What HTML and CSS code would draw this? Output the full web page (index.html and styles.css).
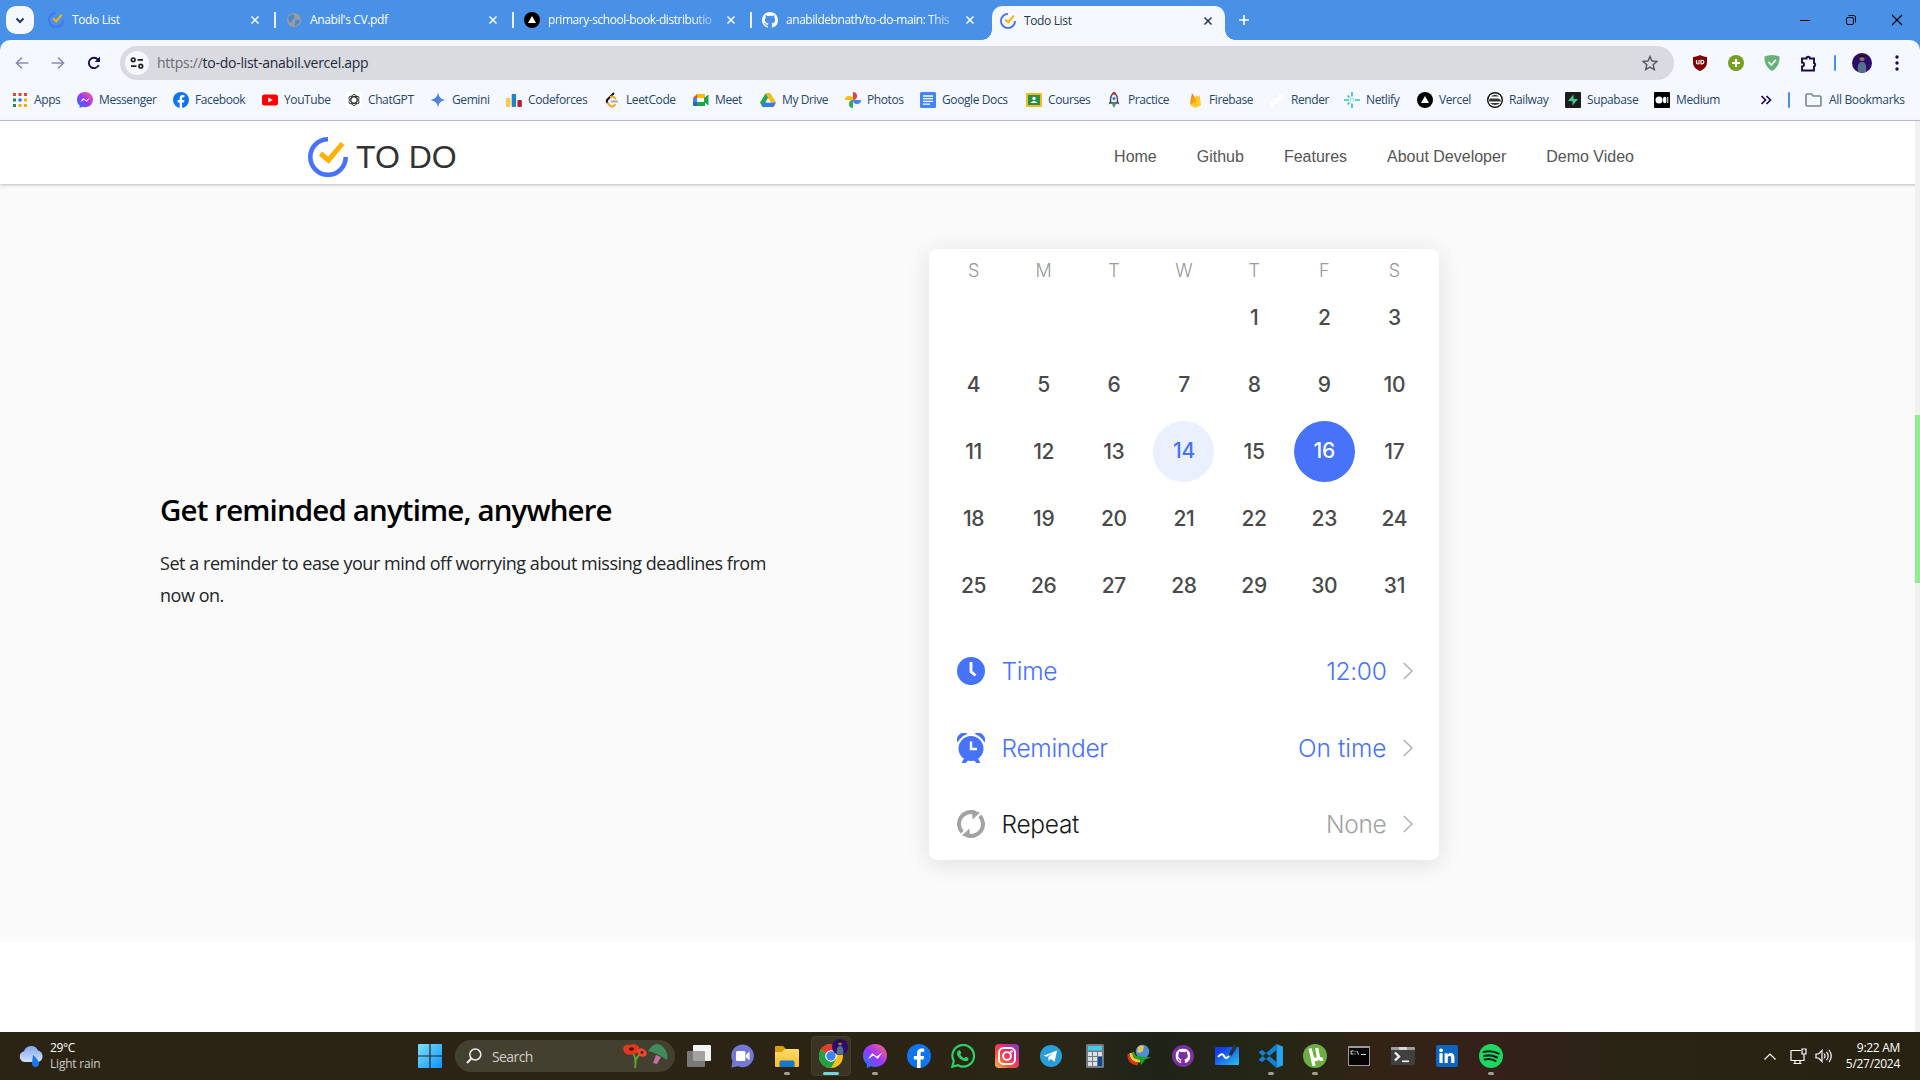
FILE: index.html
```html
<!DOCTYPE html>
<html lang="en">
<head>
<meta charset="utf-8">
<title>Todo List</title>
<link rel="stylesheet" href="styles.css">
</head>
<body>
<svg class="defs" width="0" height="0">
  <defs>
    <linearGradient id="msg" x1="0" y1="1" x2="1" y2="0"><stop offset="0" stop-color="#0a84ff"/><stop offset=".5" stop-color="#a033ff"/><stop offset="1" stop-color="#ff6a6e"/></linearGradient>
    <linearGradient id="insta" x1="0" y1="1" x2="1" y2="0"><stop offset="0" stop-color="#fdc04b"/><stop offset=".35" stop-color="#f7503c"/><stop offset=".65" stop-color="#d82d7e"/><stop offset="1" stop-color="#7a3ccc"/></linearGradient>
    <linearGradient id="win" x1="0" y1="0" x2="1" y2="1"><stop offset="0" stop-color="#7fe0ff"/><stop offset="1" stop-color="#0a93ff"/></linearGradient>
    <linearGradient id="cloud" x1="0" y1="0" x2="0" y2="1"><stop offset="0" stop-color="#7ea6ee"/><stop offset="1" stop-color="#d3e2fb"/></linearGradient>
    <linearGradient id="gem" x1="0" y1="0" x2="1" y2="1"><stop offset="0" stop-color="#1c7de0"/><stop offset="1" stop-color="#8d86d9"/></linearGradient>
    <linearGradient id="board" x1="0" y1="0" x2="1" y2="1"><stop offset=".2" stop-color="#123cf2"/><stop offset="1" stop-color="#2bc4e6"/></linearGradient>
    <linearGradient id="folder" x1="0" y1="0" x2="0" y2="1"><stop offset="0" stop-color="#ffdc6b"/><stop offset="1" stop-color="#fbbd24"/></linearGradient>
    <symbol id="todo" viewBox="0 0 40 40"><path d="M20 2.3A17.7 17.7 0 1 0 37.7 20" fill="none" stroke="#4772fa" stroke-width="4.6"/><path d="M12.500 16.500 20.500 23.200 34.500 6.500" fill="none" stroke="#ffb000" stroke-width="5"/></symbol>
    <symbol id="x" viewBox="0 0 10 10"><path d="M1.500 1.500l7 7M8.500 1.500l-7 7" stroke="currentColor" stroke-width="1.500"/></symbol>
    <symbol id="vercel" viewBox="0 0 16 16"><circle cx="8" cy="8" r="8"/><path d="M8 4l4 7H4z" fill="#fff"/></symbol>
    <symbol id="github" viewBox="0 0 16 16"><path fill="currentColor" d="M8 0C3.580 0 0 3.580 0 8c0 3.540 2.290 6.530 5.470 7.590.4.070.55-.17.55-.38 0-.19-.01-.82-.01-1.490-2.010.37-2.530-.49-2.690-.94-.09-.23-.48-.94-.82-1.130-.28-.15-.68-.52-.01-.53.63-.01 1.080.58 1.230.82.72 1.210 1.870.87 2.330.66.070-.52.28-.87.51-1.070-1.780-.2-3.640-.89-3.640-3.950 0-.87.31-1.590.82-2.150-.08-.2-.36-1.020.08-2.120 0 0 .67-.21 2.200.82.64-.18 1.320-.27 2-.27s1.360.09 2 .27c1.530-1.040 2.200-.82 2.200-.82.44 1.100.16 1.920.08 2.120.51.56.82 1.270.82 2.150 0 3.070-1.870 3.750-3.650 3.950.29.25.54.73.54 1.480 0 1.070-.01 1.930-.01 2.200 0 .21.15.46.55.38A8 8 0 0 0 16 8c0-4.420-3.580-8-8-8z"/></symbol>
    <symbol id="messenger" viewBox="0 0 24 24"><path fill="url(#msg)" d="M12 0C5.200 0 0 5 0 11.600c0 3.500 1.400 6.500 3.800 8.500L4 24l4-1.700c1.200.4 2.600.6 4 .6 6.800 0 12-5 12-11.500S18.800 0 12 0z"/><path d="M4.800 15.300 9.300 9l4.300 3.600L19.200 8.800 14.700 15l-4.300-3.500z" fill="#fff"/></symbol>
    <symbol id="facebook" viewBox="0 0 24 24"><circle cx="12" cy="12" r="12" fill="#0f74ee"/><path fill="#fff" d="M10 24v-8.400H6.900V12H10V9.400C10 6.200 11.900 4.500 14.600 4.500c1.100 0 2 .1 2.600.2v3h-1.700c-1.500 0-1.900.8-1.900 1.800V12h3.500l-.6 3.600h-2.900V24z"/></symbol>
    <symbol id="avatar" viewBox="0 0 20 20"><circle cx="10" cy="10" r="10" fill="#2c0b6b"/><path d="M6 18.800c-.6-5-.3-9.500 4-10 4.300.5 4.600 5 4 10a10 10 0 0 1-8 0z" fill="#54718a"/><circle cx="10" cy="5.500" r="2.500" fill="#96705d"/><path d="M7.300 5c0-4.300 5.400-4.300 5.400 0-1.800-1-3.600-1-5.400 0z" fill="#181111"/></symbol>
    <symbol id="chev" viewBox="0 0 10 18"><path d="M.8 1 9 9 .8 17" fill="none" stroke="#aaa" stroke-width="1.300"/></symbol>
  </defs>
</svg>

<div class="tabstrip">
  <button class="tabsearch"><svg width="10" height="7" viewBox="0 0 10 7"><path d="M1.500 1.500 5 5l3.500-3.500" fill="none" stroke="#1d3a5f" stroke-width="2"/></svg></button>
  <div class="tab"><svg class="fav"><use href="#todo"/></svg><span class="tt">Todo List</span><svg class="close"><use href="#x"/></svg></div>
  <div class="tab"><svg class="fav" viewBox="0 0 16 16"><circle cx="8" cy="8" r="7" fill="#9c9c9c"/><path d="M2 6c2-3 4-4 6-4-1 2 1 2 0 4s-2 1-2 3-2 2-3 0zM9 8c2-1 4 0 5 1-1 3-3 4-5 5-1-2 1-3 0-6z" fill="#4b88ca"/></svg><span class="tt">Anabil's CV.pdf</span><svg class="close"><use href="#x"/></svg></div>
  <div class="tab"><svg class="fav"><use href="#vercel"/></svg><span class="tt fade">primary-school-book-distributio</span><svg class="close"><use href="#x"/></svg></div>
  <div class="tab last"><svg class="fav"><use href="#github"/></svg><span class="tt fade">anabildebnath/to-do-main: This</span><svg class="close"><use href="#x"/></svg></div>
  <div class="tab active"><svg class="fav"><use href="#todo"/></svg><span class="tt">Todo List</span><svg class="close"><use href="#x"/></svg></div>
  <svg class="plus" viewBox="0 0 12 12"><path d="M6 1v10M1 6h10" stroke="#fff" stroke-width="1.600"/></svg>
  <div class="winctl">
    <svg width="12" height="12" viewBox="0 0 12 12"><path d="M1 6.500h10" stroke="#000"/></svg>
    <svg width="12" height="12" viewBox="0 0 12 12" fill="none" stroke="#000"><rect x="1.500" y="3.500" width="7" height="7" rx="1.500"/><path d="M3.500 1.500h5a2 2 0 0 1 2 2v5"/></svg>
    <svg width="12" height="12" viewBox="0 0 12 12"><path d="M1 1l10 10M11 1 1 11" stroke="#000" stroke-width="1.100"/></svg>
  </div>
</div>

<div class="chrome">
  <div class="toolbar">
    <div class="navbtns">
      <svg width="14" height="14" viewBox="0 0 14 14" fill="none" stroke="#8f8db0" stroke-width="1.700"><path d="M13.500 7H1.500M7 1.500 1.500 7 7 12.500"/></svg>
      <svg width="14" height="14" viewBox="0 0 14 14" fill="none" stroke="#8f8db0" stroke-width="1.700"><path d="M.5 7h12M7 1.500 12.500 7 7 12.500"/></svg>
      <svg width="14" height="14" viewBox="0 0 14 14"><path d="M11.800 9A5.200 5.200 0 1 1 11 3.600l1 1" fill="none" stroke="#1c0a50" stroke-width="1.900"/><path d="M13 .5V6H7.800z" fill="#1c0a50"/></svg>
    </div>
    <div class="omni">
      <span class="site"><svg width="14" height="12" viewBox="0 0 14 12" fill="none" stroke="#222" stroke-width="1.700"><circle cx="3.200" cy="2.800" r="1.800"/><path d="M7.500 2.800H13M1 9.200h5.500"/><circle cx="10.800" cy="9.200" r="1.800"/></svg></span>
      <span class="url"><i>https://</i>to-do-list-anabil.vercel.app</span>
      <svg class="star" viewBox="0 0 16 16"><path d="M8 1.500l2 4.500 4.900.5-3.700 3.300 1.100 4.800L8 12.100l-4.300 2.500 1.100-4.800L1.100 6.500 6 6z" fill="none" stroke="#5a5c66" stroke-width="1.500"/></svg>
    </div>
    <div class="exts">
      <svg width="16" height="16" viewBox="0 0 16 16"><path d="M8 0c2 1.200 4 1.700 7 2v5c0 4-2 7-7 9-5-2-7-5-7-9V2c3-.3 5-.8 7-2z" fill="#800000"/><path d="M4.500 5v2.500q0 1.500 1.300 1.500T7 7.500V5M9 5.300v3.500h1q1.800 0 1.800-1.800T10 5.300z" fill="none" stroke="#fff" stroke-width="1.200"/></svg>
      <svg width="16" height="16" viewBox="0 0 16 16"><circle cx="8" cy="8" r="8" fill="#76a021"/><path d="M8 4v8M4 8h8" stroke="#fff" stroke-width="2.200"/></svg>
      <svg width="16" height="16" viewBox="0 0 16 16"><path d="M8 0c3 .2 5 .6 7.500 1.500C15.800 8 13.500 12.500 8 16 2.500 12.500.2 8 .5 1.500 3 .6 5 .2 8 0z" fill="#67b279"/><path d="M4.500 7l2.800 3L12 4.800" fill="none" stroke="#fff" stroke-width="1.600"/></svg>
      <svg width="17" height="17" viewBox="0 0 17 17"><path d="M2 3.500h4.500a1.700 1.700 0 0 1 3.400 0H14V8a1.700 1.700 0 0 1 0 3.300V15.500H2v-4a2 2 0 0 0 0-4z" fill="none" stroke="#1c0a50" stroke-width="1.900"/></svg>
      <span class="vsep"></span>
      <svg width="20" height="20"><use href="#avatar"/></svg>
      <svg width="4" height="16" viewBox="0 0 4 16" fill="#1c0a50"><circle cx="2" cy="2" r="1.700"/><circle cx="2" cy="8" r="1.700"/><circle cx="2" cy="14" r="1.700"/></svg>
    </div>
  </div>
  <div class="bookmarks">
    <a><svg viewBox="0 0 16 16"><path fill="#ea4335" d="M1 1h3v3H1zM6.500 1h3v3h-3zM12 1h3v3h-3z"/><path fill="#1e8e4e" d="M1 6.500h3v3H1zM1 12h3v3H1z"/><path fill="#1a73e8" d="M6.500 6.500h3v3h-3z"/><path fill="#f9ab00" d="M12 6.500h3v3h-3zM6.500 12h3v3h-3zM12 12h3v3h-3z"/></svg>Apps</a>
    <a><svg><use href="#messenger"/></svg>Messenger</a>
    <a><svg><use href="#facebook"/></svg>Facebook</a>
    <a><svg viewBox="0 0 16 16"><rect y="2.500" width="16" height="11" rx="2.500" fill="#f00"/><path d="M6.300 5.500v5L10.800 8z" fill="#fff"/></svg>YouTube</a>
    <a><svg viewBox="0 0 16 16"><rect width="16" height="16" fill="#fff"/><g fill="none" stroke="#222" stroke-width=".9"><ellipse cx="8" cy="8" rx="3" ry="5.600"/><ellipse cx="8" cy="8" rx="3" ry="5.600" transform="rotate(60 8 8)"/><ellipse cx="8" cy="8" rx="3" ry="5.600" transform="rotate(120 8 8)"/></g></svg>ChatGPT</a>
    <a><svg viewBox="0 0 16 16"><path fill="url(#gem)" d="M8 0c.6 5 2.800 7.200 8 8-5.200.8-7.400 3-8 8-.6-5-2.800-7.200-8-8 5.200-.8 7.400-3 8-8z"/></svg>Gemini</a>
    <a><svg viewBox="0 0 16 16"><rect y="6" width="4.400" height="9" rx="1" fill="#f9cb4c"/><rect x="5.700" y="2" width="4.400" height="13" rx="1" fill="#2083c4"/><rect x="11.400" y="8" width="4.400" height="7" rx="1" fill="#b61f2b"/></svg>Codeforces</a>
    <a><svg viewBox="0 0 16 16" fill="none" stroke-width="2"><path d="M10 1 3.500 7.500q-1.500 1.700 0 3.300" stroke="#111"/><path d="M3.500 10.800 6 13.500q2 2 4 .3l1.500-1.500M6 5.300q2-1.500 4 0L12 7" stroke="#f5a623"/><path d="M7 9.500h7" stroke="#aaa"/></svg>LeetCode</a>
    <a><svg viewBox="0 0 16 16"><path d="M0 6l4-4v4z" fill="#ea4335"/><path d="M4 2h7q1 0 1 1v3H4z" fill="#fbbc04"/><path d="M0 6h4v4H0z" fill="#4285f4"/><path d="M0 10h4v4H1q-1 0-1-1z" fill="#1967d2"/><path d="M4 10h8v4H4zM11 6l4.500-3.500v11L11 10z" fill="#22a34b"/></svg>Meet</a>
    <a><svg viewBox="0 0 16 16"><path d="M5.500 1.500h5L5 15H2.500L0 10.500z" fill="#22a55a"/><path d="M5.500 1.500h5L16 10.500h-5z" fill="#fbbc04"/><path d="M4 10.500h12L13.500 15h-11z" fill="#3b78e7"/><path d="M8 6l3 4.500H5.300z" fill="#f5f8fe"/></svg>My Drive</a>
    <a><svg viewBox="0 0 16 16"><path d="M8 0a4 4 0 0 1 0 8z" fill="#ea4335"/><path d="M16 8a4 4 0 0 1-8 0z" fill="#4285f4"/><path d="M8 16a4 4 0 0 1 0-8z" fill="#34a853"/><path d="M0 8a4 4 0 0 1 8 0z" fill="#fbbc04"/></svg>Photos</a>
    <a><svg viewBox="0 0 16 16"><rect width="16" height="16" rx="1.500" fill="#4285f4"/><path d="M3 4h10M3 6.700h10M3 9.400h10M3 12.100h7" stroke="#fff" stroke-width="1.300"/></svg>Google Docs</a>
    <a><svg viewBox="0 0 16 16"><rect y="1" width="16" height="14" rx="1" fill="#f6bb18"/><rect x="2" y="3" width="12" height="10" fill="#27924f"/><circle cx="8" cy="6.500" r="1.700" fill="#fff"/><path d="M4.500 11q3.500-4 7 0z" fill="#fff"/></svg>Courses</a>
    <a><svg viewBox="0 0 16 16"><path d="M8 0q5 5 3 11H5Q3 5 8 0z" fill="#e8edf1" stroke="#3c4a57" stroke-width="1.300"/><path d="M5 2.800 8 .3l3 2.500z" fill="#d73030"/><circle cx="8" cy="6.500" r="1.500" fill="#2f80c0"/><path d="M6 12h4l-2 4z" fill="#38a552"/><path d="M4.500 8 2.500 12.500 5 11zM11.500 8l2 4.500L11 11z" fill="#334"/></svg>Practice</a>
    <a><svg viewBox="0 0 16 16"><path d="M3 12 5 .8 8 6z" fill="#f58220"/><path d="M3 13 10 3l1 2 1.500-2L14 13l-5.500 3z" fill="#ffca28"/><path d="M3 12.500 6 4l4 5z" fill="#ffa000"/></svg>Firebase</a>
    <a><svg viewBox="0 0 16 16"><path d="M1 15v-5h4V6h4V2.500q5-2.500 6 2-1 5-6 4.500v3H5v3z" fill="#fff"/></svg>Render</a>
    <a><svg viewBox="0 0 16 16"><path d="M8 0v4.500M8 11.500V16M0 8h5M11 8h5M3.500 12.500l2-2M3.500 3.500l2 2" stroke="#32c3c6" stroke-width="1.700"/><path d="M6.500 9.500v-3h3v3" stroke="#9cdfe0" fill="none"/></svg>Netlify</a>
    <a><svg><use href="#vercel"/></svg>Vercel</a>
    <a><svg viewBox="0 0 16 16"><circle cx="8" cy="8" r="7.300" fill="#fff" stroke="#111" stroke-width="1.400"/><path d="M2.500 6.500h8q3 0 3.500 3H2zM3 11h10q-5 4-10 0zM4 4.500h8q-4-3.500-8 0z" fill="#333"/></svg>Railway</a>
    <a><svg viewBox="0 0 16 16"><rect width="16" height="16" rx="1" fill="#1c1c1c"/><path d="M8.500 2.500V7H13l-5.500 6.500V9H3z" fill="#3ecf8e"/></svg>Supabase</a>
    <a><svg viewBox="0 0 16 16"><rect width="16" height="16" rx="1"/><circle cx="5" cy="8" r="3.500" fill="#fff"/><ellipse cx="10.700" cy="8" rx="1.700" ry="3.300" fill="#fff"/><path d="M13.800 5v6" stroke="#fff"/></svg>Medium</a>
    <svg class="more" viewBox="0 0 12 10"><path d="M1.500 1l4 4-4 4M6.500 1l4 4-4 4" fill="none" stroke="#1c0a50" stroke-width="1.700"/></svg>
    <span class="vsep"></span>
    <a class="all"><svg viewBox="0 0 17 14"><path d="M1 2.300q0-1.300 1.300-1.300H6.500l1.800 2h6.400Q16 3 16 4.300v7.400q0 1.300-1.300 1.300H2.300Q1 13 1 11.700z" fill="none" stroke="#72869d" stroke-width="1.600"/></svg>All Bookmarks</a>
  </div>
</div>

<div class="page">
  <header class="header">
    <div class="brand"><svg><use href="#todo"/></svg><span>TO DO</span></div>
    <nav><a>Home</a><a>Github</a><a>Features</a><a>About Developer</a><a>Demo Video</a></nav>
  </header>
  <section class="feature">
    <div class="copy">
      <h2>Get reminded anytime, anywhere</h2>
      <p>Set a reminder to ease your mind off worrying about missing deadlines from<br>now on.</p>
    </div>
    <div class="card">
      <div class="week"><span>S</span><span>M</span><span>T</span><span>W</span><span>T</span><span>F</span><span>S</span></div>
      <div class="days">
        <span class="first">1</span><span>2</span><span>3</span>
        <span>4</span><span>5</span><span>6</span><span>7</span><span>8</span><span>9</span><span>10</span>
        <span>11</span><span>12</span><span>13</span><span class="soft">14</span><span>15</span><span class="solid">16</span><span>17</span>
        <span>18</span><span>19</span><span>20</span><span>21</span><span>22</span><span>23</span><span>24</span>
        <span>25</span><span>26</span><span>27</span><span>28</span><span>29</span><span>30</span><span>31</span>
      </div>
      <div class="opts">
        <div class="opt blue"><svg class="oi" viewBox="0 0 28 28"><circle cx="14" cy="14" r="14" fill="#4772fa"/><path d="M14 5v9.500l4.500 4" fill="none" stroke="#fff" stroke-width="2.800"/></svg><span class="name">Time</span><span class="val">12:00</span><svg class="ch"><use href="#chev"/></svg></div>
        <div class="opt blue"><svg class="oi tall" viewBox="0 0 28 30"><circle cx="14" cy="15.500" r="12.500" fill="#4772fa"/><path d="M.5 9.500A7 7 0 0 1 10.500.8Q4 3.500.5 9.500zM27.500 9.500A7 7 0 0 0 17.500.8q6.500 2.700 10 8.700zM7 25.500 4.500 30h4l3-3zM21 25.500l2.500 4.500h-4l-3-3z" fill="#4772fa"/><path d="M14 8.500V16h6" fill="none" stroke="#fff" stroke-width="2.400"/></svg><span class="name">Reminder</span><span class="val wide">On time</span><svg class="ch"><use href="#chev"/></svg></div>
        <div class="opt"><svg class="oi" viewBox="0 0 28 28"><path d="M5.200 22.200A12 12 0 0 1 18.500 2.900M22.800 5.800A12 12 0 0 1 9.500 25.100" fill="none" stroke="#a3a3a3" stroke-width="4"/><path d="M15 0l8 2.500-7.500 7zM13 28l-8-2.500 7.500-7z" fill="#a3a3a3"/></svg><span class="name">Repeat</span><span class="val none">None</span><svg class="ch"><use href="#chev"/></svg></div>
      </div>
    </div>
  </section>
  <div class="scroll"></div>
</div>

<footer class="taskbar">
  <div class="weather">
    <svg width="25" height="22" viewBox="0 0 25 22"><path d="M5.500 17A5.500 5.500 0 0 1 5 6.200 7.500 7.500 0 0 1 19 5.500 6 6 0 0 1 19.500 17z" fill="url(#cloud)"/><path d="M14 10q5 4 6 8 0 4-3.500 4T13 18z" fill="#1877ee"/></svg>
    <div><b>29°C</b><span>Light rain</span></div>
  </div>
  <svg class="start" viewBox="0 0 24 24"><path fill="url(#win)" d="M0 1q0-1 1-1h10.400v11.400H0zM12.600 0H23q1 0 1 1v10.400H12.600zM0 12.600h11.400V24H1q-1 0-1-1zM12.600 12.600H24V23q0 1-1 1H12.600z"/></svg>
  <div class="search">
    <svg width="16" height="16" viewBox="0 0 16 16" fill="none" stroke="#eee" stroke-width="1.500"><circle cx="9.300" cy="6.500" r="5.500"/><path d="M5.300 10.500 1 15" stroke-width="2"/></svg><span>Search</span>
    <svg class="flora" width="46" height="26" viewBox="0 0 46 26"><path d="M10 9q5 6 3 16M20 9q-6 5-7 11" stroke="#5da832" stroke-width="1.800" fill="none"/><path d="M1 6Q2 1 8 2q5-3 9 2 1 6-5 7-9 3-11-5z" fill="#e5371f"/><path d="M15 8q3-4 6-2 5 2 3 7-7 3-9-5z" fill="#ee4a2b"/><ellipse cx="9.500" cy="6" rx="2.600" ry="1.800" fill="#4a1515"/><circle cx="20" cy="9.500" r="1.400" fill="#4a1515"/><path d="M34 12l5 2-4 7-4-1z" fill="#c36fa5"/><path d="M26 8Q33-3 40 3t5 14Q35 10 26 8z" fill="#3f8b5c"/></svg>
  </div>
  <div class="apps">
    <span><svg viewBox="0 0 24 24"><rect x="6" y="1" width="18" height="16" rx="1" fill="#f4f4f4"/><rect y="7" width="18" height="16" rx="1" fill="#8d8d8d" opacity=".8"/></svg></span>
    <span><svg viewBox="0 0 24 24"><path d="M.5 23.500 1.500 17A11.300 11.300 0 1 1 7 22.200z" fill="#7477d4"/><rect x="5" y="7" width="9.500" height="10" rx="1.500" fill="#fff"/><path d="M15 11l3.500-3.500v9L15 13z" fill="#fff"/></svg></span>
    <span class="run"><svg viewBox="0 0 24 24"><path d="M0 3q0-1 1-1h7l3 3h12v5H0z" fill="#dc9c0c"/><path d="M0 8h7l3-3h13q1 0 1 1v16q0 1-1 1H1q-1 0-1-1z" fill="url(#folder)"/><path d="M4.500 23v-5q0-1.500 1.500-1.500h12q1.500 0 1.500 1.500v5z" fill="#1378c7"/></svg></span>
    <span class="run cur"><svg viewBox="0 0 24 24"><circle cx="12" cy="12" r="12" fill="#fbc116"/><path d="M12 12 1.600 6A12 12 0 0 1 22.400 6z" fill="#e33b2e"/><path d="M12 12 1.600 6A12 12 0 0 0 12 24l5.200-9z" fill="#23a045"/><circle cx="12" cy="12" r="5.800" fill="#fff"/><circle cx="12" cy="12" r="4.700" fill="#3f83f3"/></svg><svg class="badge"><use href="#avatar"/></svg></span>
    <span class="run"><svg><use href="#messenger"/></svg></span>
    <span><svg><use href="#facebook"/></svg></span>
    <span><svg viewBox="0 0 24 24"><path d="M1.300 22.700l1.500-5.700A10.800 10.800 0 1 1 7 21.200z" fill="none" stroke="#25d366" stroke-width="2.200"/><path d="M7.300 6.500q1-1 2 .2l1 2.300-1 1.500q1.300 2.500 4 3.800l1.500-1.600 2.700 1.300q.5 3-2.800 3.200-6.200-.7-8.700-6.700-.4-2.500 1.300-4z" fill="#25d366"/></svg></span>
    <span><svg viewBox="0 0 24 24"><rect width="24" height="24" rx="4" fill="url(#insta)"/><g fill="none" stroke="#fff" stroke-width="1.900"><rect x="4" y="4" width="16" height="16" rx="4.500"/><circle cx="12" cy="12" r="3.900"/></g><circle cx="16.500" cy="7.500" r="1.200" fill="#fff"/></svg></span>
    <span><svg viewBox="0 0 24 24"><circle cx="12" cy="12" r="11" fill="#2a9ed8"/><path d="M4.500 11.800 18 6.500l-2.300 11.300-4-2.800-2 2-.5-4 5.500-4.500-7 4.200z" fill="#fff"/></svg></span>
    <span><svg viewBox="0 0 24 24"><rect x="3" width="18" height="24" rx="1.500" fill="#747b82"/><rect x="5" y="2" width="14" height="4.500" fill="#43cbee"/><path d="M5 8h4v4H5zM10 8h4v4h-4zM15 8h4v4h-4zM5 13h4v4H5zM10 13h4v4h-4zM5 18h4v4H5zM10 18h4v4h-4z" fill="#d9dfe4"/><path d="M15 13h4v9h-4z" fill="#0b4a8f"/></svg></span>
    <span><svg viewBox="0 0 24 24"><path d="M2 10q-1 9 9 10" fill="none" stroke="#d93221" stroke-width="3"/><path d="M4 9q0 8 9 8" fill="none" stroke="#f0cf2a" stroke-width="3"/><path d="M6 8q1 6 8 7" fill="none" stroke="#36a839" stroke-width="2"/><circle cx="15.500" cy="7.500" r="6.800" fill="#4c8fd0"/><path d="M11 3q3-3 6-1l-1 5-3 2-3-1z" fill="#dfc458"/><path d="M9 12l15 1.500-6 2-4 6-1-5z" fill="#1da528"/></svg></span>
    <span><svg viewBox="0 0 24 24" color="#fff"><circle cx="12" cy="12" r="11" fill="#7b2fa0"/><use href="#github" x="4.500" y="4.500" width="15" height="15"/></svg></span>
    <span><svg viewBox="0 0 24 24"><rect y="3" width="24" height="18" rx="1" fill="url(#board)"/><path d="M3 13q4-5 6-1t5 0" fill="none" stroke="#fff" stroke-width="2"/><path d="M15 11 21 1.500" stroke="#28323c" stroke-width="3.600"/></svg></span>
    <span class="run"><svg viewBox="0 0 24 24"><path d="M17.500 0 24 2.800v18.400L17.500 24z" fill="#29a3ee"/><path d="M17.500 0v6L3 18.200l-2.700-2q-.5-.6 0-1.200zM17.500 24v-6L3 5.800l-2.700 2q-.5.6 0 1.200z" fill="#1381cf"/></svg></span>
    <span class="run"><svg viewBox="0 0 24 24"><circle cx="12" cy="12" r="12" fill="#6dae43"/><path d="M7 4.500 9 12q1 4 4 3.500t2-5L13.700 4M9 12.500 11 22M15.500 13q.8 3 4.500 2" fill="none" stroke="#fff" stroke-width="3.300"/></svg></span>
    <span><svg viewBox="0 0 24 24"><rect x="1" y="2" width="22" height="20" rx="1" fill="#9b9b9b"/><rect x="2" y="4" width="20" height="17" fill="#050505"/><path d="M6.500 7H4v3h2.500M8 7v1M8 9.500v1M10 7l1.500 3.500M14 10.500h5" fill="none" stroke="#ddd" stroke-width="1"/></svg></span>
    <span><svg viewBox="0 0 24 24"><rect y="3" width="24" height="18" rx="1" fill="#404040"/><path d="M0 6V4q0-1 1-1h22q1 0 1 1v2z" fill="#9d9d9d"/><path d="M8 3h8v3H8z" fill="#d6d6d6"/><path d="M4 8.500 8 12.500 4 16.500" fill="none" stroke="#eee" stroke-width="2.400"/><path d="M11 17.300h7" stroke="#eee" stroke-width="1.700"/></svg></span>
    <span><svg viewBox="0 0 24 24"><rect x="1" y="1" width="22" height="22" rx="2" fill="#0a66c2"/><circle cx="6" cy="6.300" r="1.900" fill="#fff"/><path d="M4.400 9.300h3.200V19H4.400zM9.600 9.300h3v1.400c1.600-2.500 6.800-2.300 6.800 2.500V19h-3.200v-5.200c0-2.600-3.400-2.300-3.400 0V19H9.600z" fill="#fff"/></svg></span>
    <span class="run"><svg viewBox="0 0 24 24"><circle cx="12" cy="12" r="12" fill="#1ed760"/><path d="M4.500 8q8-2.200 15.200 1.700M5 12q7-1.800 13 1.500M5.500 15.500q6-1.400 11 1.400" fill="none" stroke="#14241a" stroke-width="2.100" stroke-linecap="round"/></svg></span>
  </div>
  <div class="tray">
    <svg width="12" height="7" viewBox="0 0 12 7"><path d="M.5 6.500 6 1l5.500 5.500" fill="none" stroke="#fff" stroke-width="1.200"/></svg>
    <svg class="net" width="17" height="17" viewBox="0 0 17 17" fill="none" stroke="#fff" stroke-width="1.200"><path d="M11 2.500H1v10h13V7M5 12.500v3M10 12.500v3M3.500 15.500h8M12 1h4v5h-4zM14 6v7"/></svg>
    <svg width="17" height="14" viewBox="0 0 17 14" fill="none" stroke="#fff" stroke-width="1.200"><path d="M1 5v4h2.500L7 12.500v-11L3.500 5zM9 4.500q2 2.500 0 5M11.500 2.800q3.300 4.200 0 8.400M14 1q4.500 6 0 12"/></svg>
    <div class="clock"><span>9:22 AM</span><span>5/27/2024</span></div>
  </div>
</footer>
</body>
</html>
```
FILE: styles.css
```css
* { box-sizing: border-box; }
body { margin: 0; width: 1920px; height: 1080px; overflow: hidden; display: flex; flex-direction: column; background: #fff; font-family: "Open Sans", "Noto Sans", sans-serif; font-size: 12px; color: #26466d; }
.defs { position: absolute; }
svg { display: block; flex: none; }

.tabstrip { height: 40px; flex: none; background: #4891e7; display: flex; align-items: center; padding-left: 6px; }
.tabsearch { width: 28px; height: 28px; border: 0; border-radius: 10px; background: #f5f8fe; display: flex; align-items: center; justify-content: center; padding: 0; margin-right: 10px; }
.tab { width: 238px; height: 16px; display: flex; align-items: center; padding: 0 14px 0 10px; border-right: 2px solid #e9f2fd; color: #fff; }
.tabsearch + .tab { width: 232px; padding-left: 4px; }
.tab.last { border: 0; width: 240px; padding-right: 17px; }
.fav { width: 16px; height: 16px; margin-right: 8px; }
.tt { flex: 1; white-space: nowrap; font-size: 12px; line-height: 16px; letter-spacing: -0.36px; margin-right: 16px; }
.tt.fade { letter-spacing: -0.45px; margin-right: 8px; mask-image: linear-gradient(90deg, #000 84%, rgba(0, 0, 0, .25)); }
.close { width: 10px; height: 10px; }
.tab.active { position: relative; width: 233px; height: 34px; align-self: flex-end; border: 0; border-radius: 10px 10px 0 0; background: #f5f8fe; color: #26364f; padding: 0 12px 5px 8px; }
.tab.active::before, .tab.active::after { content: ""; position: absolute; bottom: 0; width: 10px; height: 10px; }
.tab.active::before { left: -10px; background: radial-gradient(circle at 0 0, transparent 9.500px, #f5f8fe 10px); }
.tab.active::after { right: -10px; background: radial-gradient(circle at 100% 0, transparent 9.500px, #f5f8fe 10px); }
.plus { width: 12px; height: 12px; margin-left: 13px; }
.winctl { display: flex; gap: 34px; margin: 0 17px 0 auto; }

.chrome { height: 81px; flex: none; background: linear-gradient(#f5f8fe, #f5f8fe) 0 12px no-repeat, #4891e7; border-bottom: 1px solid #c1bfd6; }
.toolbar { height: 46px; background: #f5f8fe; border-radius: 10px 10px 0 0; display: flex; align-items: center; padding: 0 20px 0 15px; }
.navbtns { display: flex; gap: 22px; width: 105px; flex: none; }
.omni { width: 1554px; flex: none; height: 34px; border-radius: 17px; background: #dadbe0; display: flex; align-items: center; padding: 0 16px 0 5px; }
.site { width: 24px; height: 24px; border-radius: 50%; background: #f5f8fe; display: flex; align-items: center; justify-content: center; margin-right: 8px; }
.url { font-size: 14px; line-height: 18px; letter-spacing: -0.27px; color: #1e2a3c; flex: 1; padding-bottom: 1px; }
.url i { font-style: normal; color: #696c75; }
.star { width: 16px; height: 16px; }
.exts { display: flex; align-items: center; gap: 20px; margin-left: 18px; }
.exts .vsep { margin: 0 -4px 0 -3px; }
.exts svg:last-child { margin-left: 3px; }
.vsep { width: 2px; height: 16px; background: #4891e7; border-radius: 1px; }
.bookmarks { height: 27px; display: grid; grid-template-columns: 65px 96px 89px 84px 84px 76px 98px 89px 67px 85px 75px 106px 80px 81px 82px 75px 73px 70px 78px 89px 106px 28px 17px 1fr; align-items: center; padding-left: 12px; }
.bookmarks a { display: flex; align-items: center; gap: 6px; white-space: nowrap; letter-spacing: -0.4px; }
.bookmarks a svg { width: 16px; height: 16px; }
.bookmarks .more { width: 12px; height: 10px; }
.bookmarks .all svg { width: 17px; height: 14px; }
.bookmarks .all { gap: 7px; letter-spacing: -0.34px; }

.page { position: relative; flex: none; height: 911px; background: #fff; }
.header { position: relative; height: 63px; background: #fff; box-shadow: 0 1px 3px rgba(0, 0, 0, .25); display: flex; justify-content: space-between; align-items: center; padding: 9px 286px 0 308px; font-family: "Liberation Sans", Arial, sans-serif; }
.brand { display: flex; align-items: center; gap: 8px; font-size: 32px; color: #333; }
.brand svg { width: 40px; height: 40px; }
nav { display: flex; gap: 40px; font-size: 16px; color: #555; }
.feature { height: 758px; background: #fafafa; display: flex; }
.copy { width: 929px; padding: 302px 0 0 160px; }
h2 { margin: 0; font-size: 29.500px; line-height: 48px; font-weight: 600; color: #000; letter-spacing: -0.86px; white-space: nowrap; }
p { margin: 13px 0 0; font-size: 18px; line-height: 32px; color: #212529; letter-spacing: -0.46px; white-space: nowrap; }
.card { width: 510px; height: 611px; margin-top: 65px; background: #fff; border-radius: 8px; box-shadow: 0 4px 24px rgba(0, 0, 0, .11); padding: 0 9.500px; font-family: Inter, sans-serif; }
.week, .days { display: grid; grid-template-columns: repeat(7, 1fr); justify-items: center; }
.week { height: 35px; padding-top: 8px; line-height: 28px; font-size: 18px; color: #999; font-weight: 300; }
.days { grid-auto-rows: 67px; align-items: center; font-size: 21px; font-weight: 500; color: #4a4a4a; letter-spacing: -0.3px; }
.days .first { grid-column: 5; }
.days .soft, .days .solid { width: 61px; height: 61px; line-height: 59px; border-radius: 50%; text-align: center; }
.days .soft { background: #ebf0ff; color: #4772fa; }
.days .solid { background: #4772fa; color: #fff; }
.opts { padding: 14px 17px 0 18px; }
.opt { height: 76.400px; display: flex; align-items: center; font-size: 24.500px; color: #191919; font-weight: 350; letter-spacing: -0.3px; }
.opt.blue { color: #4772fa; }
.oi { width: 28px; height: 28px; margin-right: 17px; }
.oi.tall { height: 30px; }
.val { margin: 0 16px 0 auto; }
.val.wide { letter-spacing: 0; }
.val.none { color: #a3a3a3; }
.ch { width: 10px; height: 18px; }
.scroll { position: absolute; right: 0; top: 0; width: 5px; height: 911px; background: linear-gradient(#90ee90, #90ee90) 0 294px / 5px 168px no-repeat #f1f1f1; }

.taskbar { height: 48px; flex: none; display: flex; align-items: center; color: #fff; background: linear-gradient(90deg, #2b2414 0, #2b2414 50%, #292617 56%, #1f2318 60%, #242615 66%, #332315 72%, #35201a 78%, #2a2415 84%, #272111 100%); padding: 0 20px; }
.weather { display: flex; align-items: center; gap: 6px; width: 399px; margin-left: -1px; }
.weather b, .weather span { display: block; font-weight: 400; font-size: 12px; line-height: 16px; letter-spacing: -0.2px; }
.weather b { letter-spacing: -0.4px; }
.weather span { color: #ccc; }
.start { width: 24px; height: 24px; }
.search { width: 220px; height: 32px; border-radius: 16px; background: #444030; margin-left: 13px; display: flex; align-items: center; padding: 0 7px 0 11px; font-size: 14px; letter-spacing: -0.6px; color: #d0cec8; gap: 10px; }
.flora { margin-left: auto; }
.apps { display: flex; gap: 4px; margin-left: 4px; }
.apps > span { position: relative; width: 40px; height: 40px; border-radius: 4px; display: flex; align-items: center; justify-content: center; }
.apps > span > svg { width: 24px; height: 24px; }
.apps .run::after { content: ""; position: absolute; bottom: 1px; left: 17px; width: 6px; height: 3px; border-radius: 2px; background: #a29e96; }
.apps .cur { background: #3a3424; border: 1px solid #443e2e; }
.apps .cur::after { left: 11px; bottom: 0; width: 16px; background: #76d3dc; }
.apps > span > .badge { position: absolute; width: 16px; height: 16px; right: 2px; top: 2px; }
.tray { display: flex; align-items: center; margin-left: auto; }
.tray .net { margin: 0 8px 0 14px; }
.clock { width: 68px; text-align: right; font-size: 12px; line-height: 16px; letter-spacing: -0.3px; }
.clock span { display: block; }
```
